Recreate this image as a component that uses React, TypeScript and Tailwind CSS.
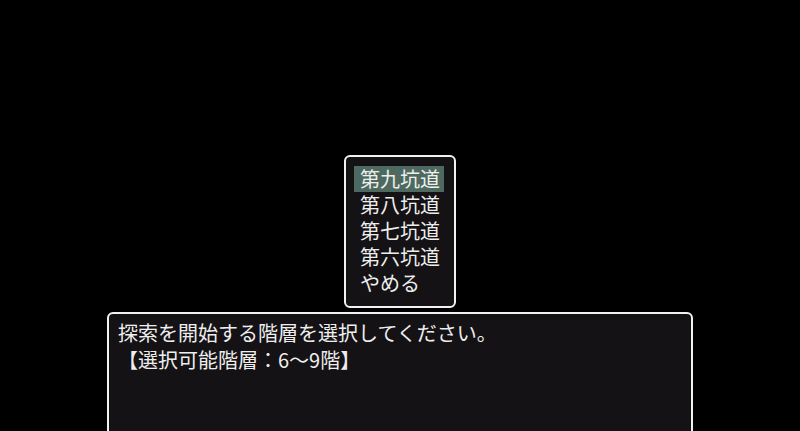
import React from "react";

const items = ["第九坑道", "第八坑道", "第七坑道", "第六坑道", "やめる"];

export default function App() {
  return (
    <div
      className="h-[431px] w-full overflow-hidden bg-black flex flex-col items-center pt-[155px]"
      style={{ fontFamily: '"Noto Sans CJK JP", "Noto Sans", sans-serif' }}
    >
      <div className="w-[112px] h-[153px] shrink-0 rounded-[6px] border-2 border-[#f2f2f2] bg-[#141214] pl-[8px] pt-[9px]">
        {items.map((t, i) => (
          <div
            key={t}
            className={
              "w-[90px] h-[26px] pl-[6px] flex items-center text-[20px] leading-[26px] text-[#eeeeee] " +
              (i === 0 ? "bg-[#4e6a60]" : "")
            }
          >
            {t}
          </div>
        ))}
      </div>
      <div className="mt-[4px] w-[586px] h-[140px] shrink-0 rounded-[6px] border-2 border-[#f2f2f2] bg-[#141214] pl-[9px] pt-[5px] text-[20px] leading-[27px] text-[#eeeeee]">
        <div>探索を開始する階層を選択してください。</div>
        <div>【選択可能階層：6〜9階】</div>
      </div>
    </div>
  );
}
